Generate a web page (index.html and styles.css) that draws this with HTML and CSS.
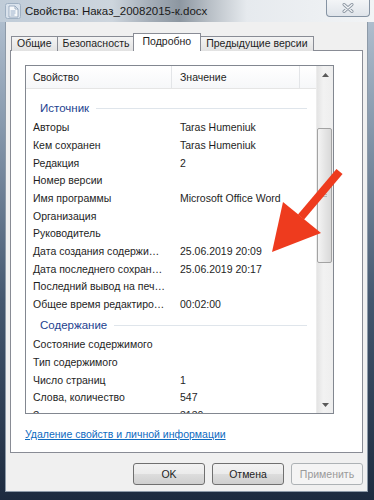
FILE: index.html
```html
<!DOCTYPE html>
<html lang="ru">
<head>
    <meta charset="UTF-8">
    <meta name="viewport" content="width=device-width, initial-scale=1.0">
    <title>Свойства: Наказ_20082015-к.docx</title>
    <link rel="stylesheet" href="styles.css">
</head>
<body>
    <div class="window">
        <div class="titlebar">
            <svg class="app-icon" width="16" height="16" viewBox="0 0 16 16">
                <rect x="0.5" y="0.5" width="15" height="15" rx="2" fill="#d9e2ec" stroke="#9fb0c2"/>
                <path d="M4 3h6l3 3v8H4z" fill="#f7f9fb" stroke="#8aa0b6" stroke-width="0.8"/>
                <path d="M10 3v3h3" fill="none" stroke="#8aa0b6" stroke-width="0.8"/>
                <path d="M5.5 8h5M5.5 10h5M5.5 12h4" stroke="#7f9bbd" stroke-width="0.8"/>
            </svg>
            <span class="title">Свойства: Наказ_20082015-к.docx</span>
            <div class="close-btn">
                <svg width="12" height="10" viewBox="0 0 12 10">
                    <path d="M2 1.5l8 7M10 1.5l-8 7" stroke="#8c96a2" stroke-width="3" stroke-linecap="round"/>
                    <path d="M2 1.5l8 7M10 1.5l-8 7" stroke="#f4f6f8" stroke-width="1.3" stroke-linecap="round"/>
                </svg>
            </div>
        </div>

        <div class="client">
            <div class="tabs">
                <div class="tab">Общие</div>
                <div class="tab">Безопасность</div>
                <div class="tab active">Подробно</div>
                <div class="tab">Предыдущие версии</div>
            </div>

            <div class="panel">
                <div class="listbox">
                    <div class="list-main">
                        <div class="list-head">
                            <div class="head-col first">Свойство</div>
                            <div class="head-col second">Значение</div>
                            <div class="head-col filler"></div>
                        </div>
                        <div class="list-body">
                            <div class="group">Источник</div>
                            <div class="row"><span class="name">Авторы</span><span class="val">Taras Humeniuk</span></div>
                            <div class="row"><span class="name">Кем сохранен</span><span class="val">Taras Humeniuk</span></div>
                            <div class="row"><span class="name">Редакция</span><span class="val">2</span></div>
                            <div class="row"><span class="name">Номер версии</span><span class="val"></span></div>
                            <div class="row"><span class="name">Имя программы</span><span class="val">Microsoft Office Word</span></div>
                            <div class="row"><span class="name">Организация</span><span class="val"></span></div>
                            <div class="row"><span class="name">Руководитель</span><span class="val"></span></div>
                            <div class="row"><span class="name">Дата создания содержимого</span><span class="val">25.06.2019 20:09</span></div>
                            <div class="row"><span class="name">Дата последнего сохранения</span><span class="val">25.06.2019 20:17</span></div>
                            <div class="row"><span class="name">Последний вывод на печать</span><span class="val"></span></div>
                            <div class="row"><span class="name">Общее время редактирования</span><span class="val">00:02:00</span></div>
                            <div class="group">Содержание</div>
                            <div class="row"><span class="name">Состояние содержимого</span><span class="val"></span></div>
                            <div class="row"><span class="name">Тип содержимого</span><span class="val"></span></div>
                            <div class="row"><span class="name">Число страниц</span><span class="val">1</span></div>
                            <div class="row"><span class="name">Слова, количество</span><span class="val">547</span></div>
                            <div class="row"><span class="name">Знаки, количество</span><span class="val">3130</span></div>
                        </div>
                    </div>
                    <div class="scrollbar">
                        <div class="sb-btn">
                            <svg width="7" height="4" viewBox="0 0 7 4"><path d="M0 4L3.5 0L7 4z" fill="#5a5a5a"/></svg>
                        </div>
                        <div class="sb-track">
                            <div class="sb-thumb"><span class="grip"></span></div>
                        </div>
                        <div class="sb-btn">
                            <svg width="7" height="4" viewBox="0 0 7 4"><path d="M0 0L3.5 4L7 0z" fill="#5a5a5a"/></svg>
                        </div>
                    </div>
                </div>

                <a href="#" class="link">Удаление свойств и личной информации</a>
            </div>

            <div class="buttons">
                <button class="btn">OK</button>
                <button class="btn">Отмена</button>
                <button class="btn" disabled>Применить</button>
            </div>
        </div>

        <!-- red arrow drawn over the dialog -->
        <svg class="arrow" width="374" height="500" viewBox="0 0 374 500">
            <path d="M339.5 171.5L301 217" stroke="#ee3b1e" stroke-width="8"/>
            <path d="M283 202L321 233L272 252z" fill="#ee3b1e"/>
        </svg>
    </div>
</body>
</html>
```

FILE: styles.css
```css
* {
    box-sizing: border-box;
    margin: 0;
    padding: 0;
}

body {
    background: #1f2d42;
    font-family: "Liberation Sans", Arial, sans-serif;
    font-size: 10.5px;
    color: #1e1e1e;
}

.window {
    position: relative;
    width: 374px;
    height: 500px;
    overflow: hidden;
    background: linear-gradient(to bottom, #b7c5d4 0, #8799ad 25%, #44576f 60%, #1d2b3f 100%);
}

/* Title bar (Aero glass) */
.titlebar {
    height: 22px;
    display: flex;
    align-items: center;
    padding-left: 5px;
    background: linear-gradient(to right, #c0ccd8 0%, #cdd5dd 30%, #a5aeb8 40%, #8d97a1 48%, #b8bfc6 56%, #e6eaee 66%, #f2f4f6 100%);
}

.app-icon {
    flex: none;
}

.title {
    margin-left: 4px;
    font-size: 11.5px;
    color: #1a1a1a;
}

.close-btn {
    margin-left: auto;
    margin-right: 4px;
    align-self: flex-start;
    width: 44px;
    height: 17px;
    display: flex;
    align-items: center;
    justify-content: center;
    border: 1px solid #8593a3;
    border-top: none;
    border-radius: 0 0 4px 4px;
    background: linear-gradient(to bottom, #f3f5f7, #dfe4ea);
}

/* Dialog body */
.client {
    margin: 0 6px 0 5px;
    height: 470px;
    padding: 11px 4px 0;
    background: #f0f0f0;
    border: 1px solid #8d9aa8;
    border-top: none;
}

.tabs {
    display: flex;
    align-items: flex-end;
    height: 18px;
    padding-left: 1px;
    position: relative;
    z-index: 1;
    margin-bottom: -1px;
}

.tab {
    height: 15px;
    padding: 0 5px;
    line-height: 13px;
    border: 1px solid #898c95;
    border-bottom: none;
    margin-right: -1px;
    background: linear-gradient(to bottom, #f4f4f4, #e2e2e2);
    white-space: nowrap;
}

.tab.active {
    height: 18px;
    margin: 0 -1px 0 -2px;
    padding: 0 9px;
    line-height: 14px;
    background: #fff;
    position: relative;
}

.panel {
    height: 403px;
    border: 1px solid #898c95;
    background: #fff;
    padding: 14px 0 0 14px;
}

/* Details list */
.listbox {
    width: 309px;
    height: 349px;
    border: 1px solid #828790;
    display: flex;
    overflow: hidden;
}

.list-main {
    flex: 1;
    overflow: hidden;
}

.list-head {
    display: flex;
    height: 23px;
    border-bottom: 1px solid #e5e5e5;
    background: linear-gradient(to bottom, #fff, #f6f7f9);
}

.head-col {
    display: flex;
    align-items: center;
    border-right: 1px solid #e3e5e8;
    white-space: nowrap;
}

.head-col.first {
    width: 146px;
    padding-left: 7px;
}

.head-col.second {
    width: 128px;
    padding-left: 8px;
}

.head-col.filler {
    flex: 1;
    border-right: none;
}

.list-body {
    padding-top: 7px;
}

.group {
    height: 22.4px;
    display: flex;
    align-items: center;
    padding: 2px 0 0 14px;
    font-size: 11.5px;
    color: #23428f;
}

.group::after {
    content: "";
    flex: 1;
    height: 1px;
    margin: 0 9px 0 7px;
    background: #dfe5eb;
}

.row {
    display: flex;
    align-items: center;
    height: 17.7px;
    white-space: nowrap;
}

.name {
    width: 154px;
    padding: 0 14px 0 7px;
    overflow: hidden;
    text-overflow: ellipsis;
}

/* Scroll bar */
.scrollbar {
    width: 17px;
    display: flex;
    flex-direction: column;
    background: linear-gradient(to right, #e4e4e4, #f2f2f2 40%, #eeeeee);
    border-left: 1px solid #ececec;
}

.sb-btn {
    height: 17px;
    display: flex;
    align-items: center;
    justify-content: center;
}

.sb-track {
    flex: 1;
    padding-top: 45px;
}

.sb-thumb {
    height: 135px;
    margin: 0 1px 0 0;
    border: 1px solid #a3a3a3;
    border-radius: 2px;
    background: linear-gradient(to right, #f4f4f4, #e6e6e6 50%, #d9d9d9);
    display: flex;
    align-items: center;
    justify-content: center;
}

.grip {
    width: 5px;
    height: 3px;
    border-top: 1px solid #b5b5b5;
    border-bottom: 1px solid #b5b5b5;
}

.link {
    display: inline-block;
    margin-top: 14px;
    color: #0f6bbf;
    text-decoration: underline;
}

/* Dialog buttons */
.buttons {
    display: flex;
    justify-content: flex-end;
    gap: 7px;
    margin-top: 10px;
}

.btn {
    width: 72px;
    height: 22px;
    border: 1px solid #707070;
    border-radius: 3px;
    background: linear-gradient(to bottom, #f2f2f2 0, #ebebeb 50%, #dddddd 51%, #cfcfcf 100%);
    font-family: "Liberation Sans", Arial, sans-serif;
    font-size: 10.5px;
    color: #1e1e1e;
}

.btn:disabled {
    border-color: #adb2b5;
    background: #f4f4f4;
    color: #9a9a9a;
}

.arrow {
    position: absolute;
    top: 0;
    left: 0;
    pointer-events: none;
}
```
